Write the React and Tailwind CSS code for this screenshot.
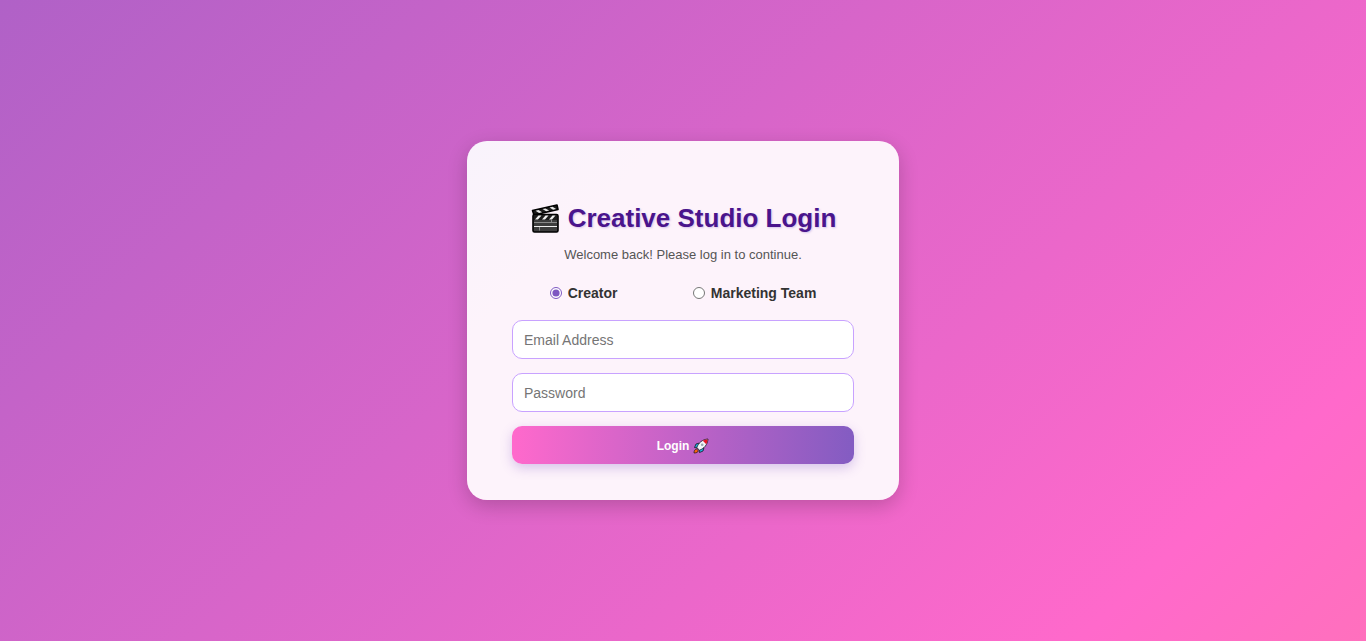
function Clapper() {
  return (
    <svg viewBox="0 0 30 30" className="h-[30px] w-[30px] shrink-0" aria-hidden="true">
      <path d="M2.500 7.500 27 2 28 6.500 4 12Z" fill="#1c1c1c" stroke="#000" strokeWidth="1.600" strokeLinejoin="round" />
      <path d="m5.500 7.700 3-.7 3.600 2.200-3 .7ZM12.500 6.100l3-.7 3.600 2.200-3 .7ZM19.500 4.500l3-.7 3.600 2.200-3 .7Z" fill="#e8e8e8" />
      <rect x="3" y="11.500" width="25" height="17.500" rx="1.500" fill="#3d3d3d" stroke="#000" strokeWidth="1.600" />
      <path d="M4 12h23v5H4Z" fill="#1c1c1c" />
      <path d="M8.500 12.500h3L8 16.500H5ZM15.500 12.500h3L15 16.500h-3ZM22.500 12.500h3L22 16.500h-3Z" fill="#f0f0f0" />
      <path d="M4 19.500h23M21.500 17v3M9.500 24v3.500" stroke="#8a8a8a" strokeWidth="1" />
      <path d="M4 23.500h23" stroke="#eee" strokeWidth="1" />
    </svg>
  );
}

function Rocket() {
  return (
    <svg viewBox="0 0 16 16" className="h-4 w-4 shrink-0" aria-hidden="true">
      <path d="M6.500 5 3 6 1.500 9.500 5 10ZM11 9.500 10 13 6.500 14.500 6 11Z" fill="#20b8e8" stroke="#15151f" strokeWidth=".8" strokeLinejoin="round" />
      <path d="M1 15c0-2.300.8-3.700 2.600-4l1.700 1.700C5 14.300 3.500 15 1 15Z" fill="#f7630c" stroke="#15151f" strokeWidth=".7" />
      <path d="M3.800 9.500C5.500 5 9 1.500 15 1c-.5 6-4 9.500-8.500 11.200Z" fill="#f1f4f7" stroke="#15151f" strokeWidth=".8" strokeLinejoin="round" />
      <path d="M9.800 2.800C11.400 1.900 13 1.400 14.600 1.400c0 1.600-.5 3.200-1.400 4.800Z" fill="#e81224" />
      <circle cx="9.200" cy="6.800" r="1.300" fill="#9aa5ad" />
    </svg>
  );
}

const radio = "m-0 h-3 w-3 accent-[#7e57c2]";
const field =
  "h-[39px] w-full rounded-[10px] border border-[#c8a2ff] bg-white px-[11px] text-[14px] text-[#333] placeholder:text-[#757575] focus:outline-2 focus:outline-[#7e57c2]";

export default function App() {
  return (
    <main className="flex min-h-screen items-center justify-center bg-[linear-gradient(137deg,#b061c7_0%,#ff69cb_86%,#ff70bd_100%)] font-['Liberation_Sans',Arial,sans-serif]">
      <section className="w-full max-w-[432px] rounded-[20px] bg-[linear-gradient(135deg,#f9f3fc_0%,#fdf3fb_25%,#fdf3fb_100%)] px-[45px] pt-[60px] pb-9 shadow-[0_6px_20px_rgba(0,0,0,0.2)]">
        <h1 className="flex items-center justify-center gap-2 text-[26px] leading-[34px] font-bold whitespace-nowrap text-[#4a148c] [text-shadow:1px_1px_2px_rgba(126,87,194,0.3)]">
          <Clapper />
          <span>Creative Studio Login</span>
        </h1>
        <p className="mt-3 text-center text-[13px] leading-[15px] text-[#555]">
          Welcome back! Please log in to continue.
        </p>
        <form className="mt-[22px]" onSubmit={(event) => event.preventDefault()}>
          <div className="flex justify-around text-[14px] leading-[18px] font-bold text-[#333]">
            <label className="flex items-center gap-[6px]">
              <input type="radio" name="role" defaultChecked className={radio} />
              Creator
            </label>
            <label className="flex items-center gap-[6px]">
              <input type="radio" name="role" className={radio} />
              Marketing Team
            </label>
          </div>
          <div className="mt-[18px] flex flex-col gap-[14px]">
            <input type="email" aria-label="Email Address" placeholder="Email Address" className={field} />
            <input type="password" aria-label="Password" placeholder="Password" className={field} />
            <button
              type="submit"
              className="flex h-[38px] items-center justify-center gap-1 rounded-[10px] bg-linear-to-r/srgb from-[#ff69cc] to-[#835cc2] pt-px text-[12px] font-bold text-white shadow-[0_4px_12px_rgba(126,87,194,0.3)]"
            >
              Login
              <Rocket />
            </button>
          </div>
        </form>
      </section>
    </main>
  );
}
